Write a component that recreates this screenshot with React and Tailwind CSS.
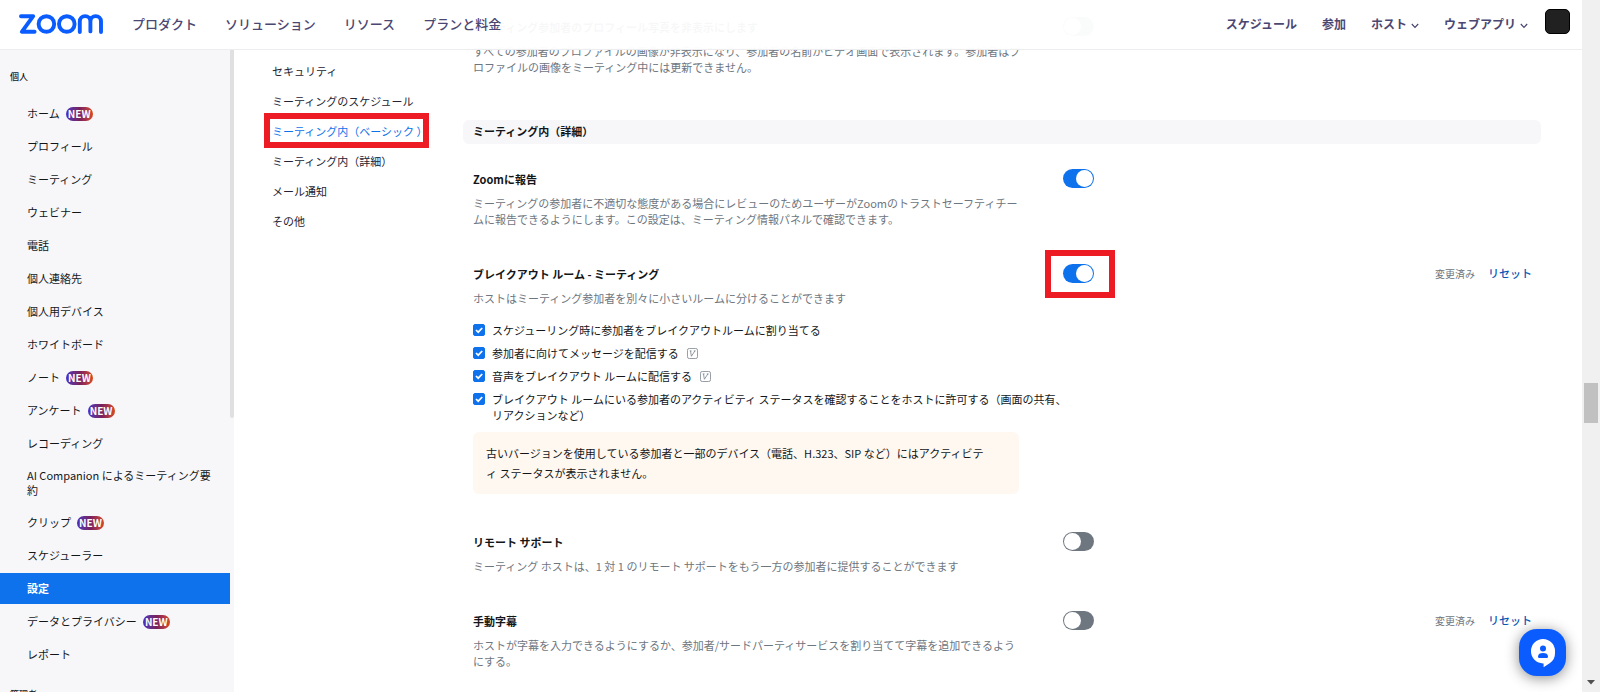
import { Fragment } from "react";

const personal = [
  ["ホーム", true],
  ["プロフィール"],
  ["ミーティング"],
  ["ウェビナー"],
  ["電話"],
  ["個人連絡先"],
  ["個人用デバイス"],
  ["ホワイトボード"],
  ["ノート", true],
  ["アンケート", true],
  ["レコーディング"],
  ["AI Companion によるミーティング要約"],
  ["クリップ", true],
  ["スケジューラー"],
  ["設定"],
  ["データとプライバシー", true],
  ["レポート"],
];

const sections = [
  "セキュリティ",
  "ミーティングのスケジュール",
  "ミーティング内（ベーシック ）",
  "ミーティング内（詳細）",
  "メール通知",
  "その他",
];

function ZoomLogo() {
  return (
    <svg viewBox="0 0 84 20" className="h-5 w-[84px]" fill="none" stroke="#0b5cff" strokeWidth="3.9" strokeLinecap="round" strokeLinejoin="round" role="img" aria-label="Zoom">
      <path d="M2 2.2H14.2L2.8 17.8H15.6" />
      <circle cx="27.4" cy="10" r="7.8" />
      <circle cx="47.8" cy="10" r="7.8" />
      <path d="M60.8 18V7.4A5.3 5.3 0 0 1 71.4 7.4V17.4M71.4 7.4A5.3 5.3 0 0 1 82 7.4V18" />
    </svg>
  );
}

function Chevron() {
  return (
    <svg viewBox="0 0 8 6" className="mt-1 ml-1 h-[6px] w-2" fill="none" stroke="#45416b" strokeWidth="1.1">
      <path d="M0.8 1L4 4.4L7.2 1" />
    </svg>
  );
}

function NewBadge() {
  return (
    <span className="ml-[6px] flex h-[14px] w-[27px] items-center justify-center rounded-full bg-linear-to-r from-[#4a2bc2] via-[#7a1f5c] to-[#d9480f] text-[10px] leading-none font-bold text-white">
      NEW
    </span>
  );
}

function Toggle({ on, label }) {
  return (
    <button
      type="button"
      role="switch"
      aria-checked={on}
      aria-label={label}
      className={
        "flex h-[19px] w-[31px] items-center rounded-full p-px " +
        (on ? "justify-end bg-[#0e72ed]" : "justify-start bg-[#6e7680]")
      }
    >
      <span className="size-[17px] rounded-full bg-white" />
    </button>
  );
}

function VersionIcon() {
  return (
    <svg viewBox="0 0 12 12" className="ml-2 size-[11px] shrink-0" fill="none" stroke="#7d8590">
      <rect x="0.5" y="0.5" width="11" height="11" rx="2" strokeWidth="0.9" />
      <path d="M3 3.2H5M3.8 3.2L4.8 9L8.6 3.2M7.4 3.2H9.4" strokeWidth="0.9" />
    </svg>
  );
}

function Check({ id, icon, children }) {
  return (
    <div className="flex items-start whitespace-nowrap">
      <span className="relative mt-[2px] mr-[7px] size-3 shrink-0">
        <input id={id} type="checkbox" defaultChecked className="peer block size-3 appearance-none rounded-[2px] border border-[#6e7680] checked:border-[#0e72ed] checked:bg-[#0e72ed]" />
        <svg viewBox="0 0 12 12" className="pointer-events-none absolute inset-0 hidden size-3 peer-checked:block" fill="none" stroke="#fff" strokeWidth="1.7">
          <path d="M3 6L5.2 8.2L9.2 4" />
        </svg>
      </span>
      <label htmlFor={id} className="leading-4">{children}</label>
      {icon && <span className="mt-[3px]"><VersionIcon /></span>}
    </div>
  );
}

function Setting({ title, on, lines, changed, framed, className, children }) {
  return (
    <section className={"flex pl-[10px] " + className}>
      <div className="w-[590px] shrink-0">
        <h3 className="leading-5 font-bold text-[#131619]">{title}</h3>
        <p className="mt-[6px] leading-4 text-[#6e7680]">
          {lines.map((line, i) => (
            <Fragment key={line}>
              {i > 0 && <br />}
              {line}
            </Fragment>
          ))}
        </p>
        {children}
      </div>
      <div className="relative h-[19px]">
        <Toggle on={on} label={title} />
        {framed && <span className="absolute -top-[14px] -left-[18px] h-12 w-[70px] border-6 border-[#ed1c24]" />}
      </div>
      {changed && (
        <div className="mr-[9px] ml-auto flex h-[18px] items-center gap-[13px]">
          <span className="text-[10px] text-[#6e7680]">変更済み</span>
          <a href="#reset" className="font-medium text-[#0956b5]">リセット</a>
        </div>
      )}
    </section>
  );
}

export default function App() {
  return (
    <div className="flex h-screen overflow-hidden bg-white font-['Noto_Sans_CJK_JP',sans-serif] text-[11px] text-[#131619]">
      <div className="relative flex min-w-0 flex-1 overflow-hidden">
        <header className="absolute inset-x-0 top-0 z-10 flex h-[50px] items-center border-b border-[#ededf0] bg-white/97 pr-3 pb-px pl-[19px] text-[#4b4773]">
          <a href="#home"><ZoomLogo /></a>
          <nav className="ml-[29px] flex gap-7 text-[13px] font-medium">
            <a href="#products">プロダクト</a>
            <a href="#solutions">ソリューション</a>
            <a href="#resources">リソース</a>
            <a href="#pricing">プランと料金</a>
          </nav>
          <nav className="ml-auto flex items-center gap-[25px] text-[12px] font-bold">
            <a href="#schedule">スケジュール</a>
            <a href="#join">参加</a>
            <button type="button" className="flex items-center">ホスト<Chevron /></button>
            <button type="button" className="flex items-center">ウェブアプリ<Chevron /></button>
          </nav>
          <button type="button" aria-label="アカウント" className="mb-[6px] ml-[17px] size-[25px] rounded-[5px] border border-black bg-[#212121]" />
        </header>

        <aside className="flex w-[234px] shrink-0 bg-[#f7f7fa] pt-[50px]">
          <div className="w-[230px]">
            <h2 className="mt-[18px] mb-3 pl-[10px] text-[9px] leading-[18px] font-medium">個人</h2>
            <nav className="flex flex-col gap-[2px]">
              {personal.map(([name, isNew]) => (
                <a
                  key={name}
                  href="#nav"
                  className={
                    "flex min-h-[31px] items-center py-[7px] pr-4 pl-[27px] leading-[15px] " +
                    (name === "設定" ? "bg-[#0e72ed] font-bold text-white" : "")
                  }
                >
                  {name}
                  {isNew && <NewBadge />}
                </a>
              ))}
            </nav>
            <h2 className="mt-4 pl-[10px] text-[9px] leading-[18px] font-medium">管理者</h2>
          </div>
          <div className="h-[368px] w-1 rounded-b-full bg-[#e0e0e0]" />
        </aside>

        <nav className="w-[229px] shrink-0 pt-14 pl-[38px]">
          {sections.map((name, i) => (
            <a key={name} href="#section" className={"relative flex h-[30px] items-center " + (i === 2 ? "text-[#0e72ed]" : "text-[#232333]")}>
              {name}
              {i === 2 && <span className="absolute -top-[3px] -left-2 h-[35px] w-[165px] border-6 border-[#ed1c24]" />}
            </a>
          ))}
        </nav>

        <main className="mr-[41px] min-w-0 flex-1 pt-[17px]">
          <Setting
            className="h-[103px]"
            title="ミーティング参加者のプロフィール写真を非表示にします"
            lines={[
              "すべての参加者のプロファイルの画像が非表示になり、参加者の名前がビデオ画面で表示されます。参加者はプ",
              "ロファイルの画像をミーティング中には更新できません。",
            ]}
          />
          <h2 className="mb-[25px] flex h-6 items-center rounded-md bg-[#f7f7fa] pb-[2px] pl-[10px] font-bold">ミーティング内（詳細）</h2>
          <Setting
            className="h-[95px]"
            title="Zoomに報告"
            on
            lines={[
              "ミーティングの参加者に不適切な態度がある場合にレビューのためユーザーがZoomのトラストセーフティチー",
              "ムに報告できるようにします。この設定は、ミーティング情報パネルで確認できます。",
            ]}
          />
          <Setting
            className="h-[268px]"
            title="ブレイクアウト ルーム - ミーティング"
            on
            changed
            framed
            lines={["ホストはミーティング参加者を別々に小さいルームに分けることができます"]}
          >
            <div className="mt-4 flex flex-col gap-[7px]">
              <Check id="assign">スケジューリング時に参加者をブレイクアウトルームに割り当てる</Check>
              <Check id="message" icon>参加者に向けてメッセージを配信する</Check>
              <Check id="audio" icon>音声をブレイクアウト ルームに配信する</Check>
              <Check id="activity">
                ブレイクアウト ルームにいる参加者のアクティビティ ステータスを確認することをホストに許可する（画面の共有、
                <br />
                リアクションなど）
              </Check>
            </div>
            <p className="mt-[9px] w-[546px] rounded-md bg-[#fff8f1] px-[13px] py-[11px] leading-5">
              古いバージョンを使用している参加者と一部のデバイス（電話、H.323、SIP など）にはアクティビテ
              <br />
              ィ ステータスが表示されません。
            </p>
          </Setting>
          <Setting
            className="h-[79px]"
            title="リモート サポート"
            lines={["ミーティング ホストは、1 対 1 のリモート サポートをもう一方の参加者に提供することができます"]}
          />
          <Setting
            title="手動字幕"
            changed
            className=""
            lines={[
              "ホストが字幕を入力できるようにするか、参加者/サードパーティサービスを割り当てて字幕を追加できるよう",
              "にする。",
            ]}
          />
        </main>

        <button type="button" aria-label="サポート" className="absolute right-4 bottom-4 z-10 flex size-[47px] items-center justify-center rounded-[18px] bg-[#0b5cff] shadow-[0_2px_14px_rgba(0,0,0,0.45)]">
          <svg viewBox="0 0 26 30" className="h-[30px] w-[26px]">
            <path fill="#fff" d="M13 1A12 12 0 0 1 25 13V15A12 12 0 0 1 20 25L13.6 29.2V25.4H13A12 12 0 0 1 1 14V13A12 12 0 0 1 13 1Z" />
            <circle cx="13" cy="10.4" r="3" fill="#0b5cff" />
            <path fill="#0b5cff" d="M8 18.5C8 16 10 15 13 15S18 16 18 18.5C18 19.6 17.4 20 16.4 20H9.6C8.6 20 8 19.6 8 18.5Z" />
          </svg>
        </button>
      </div>

      <div className="flex w-[18px] shrink-0 flex-col items-center bg-[#f0f0f0]">
        <div className="mt-[383px] h-10 w-[14px] bg-[#c1c1c1]" />
        <svg viewBox="0 0 8 5" className="mt-auto mb-[7px] h-[5px] w-2" fill="#505050">
          <path d="M0 0H8L4 4.5Z" />
        </svg>
      </div>
    </div>
  );
}
